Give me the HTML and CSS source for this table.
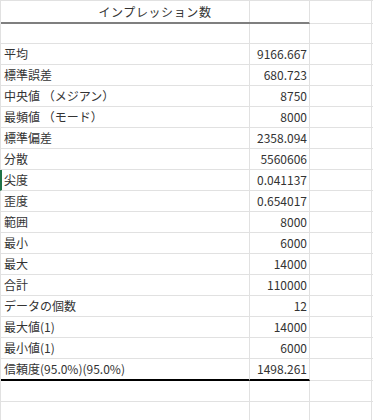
FILE: index.html
```html
<!DOCTYPE html>
<html lang="ja">
<head>
<meta charset="utf-8">
<title>記述統計</title>
<link rel="stylesheet" href="styles.css">
</head>
<body>
<div class="sheet">
  <div class="cell head title">インプレッション数</div><div class="cell head"></div><div class="cell head last"></div>

  <div class="cell blank"></div><div class="cell blank"></div><div class="cell blank"></div><div class="cell blank last"></div>

  <div class="cell label">平均</div><div class="cell num">9166.667</div><div class="cell"></div><div class="cell last"></div>
  <div class="cell label">標準誤差</div><div class="cell num">680.723</div><div class="cell"></div><div class="cell last"></div>
  <div class="cell label">中央値 （メジアン）</div><div class="cell num">8750</div><div class="cell"></div><div class="cell last"></div>
  <div class="cell label">最頻値 （モード）</div><div class="cell num">8000</div><div class="cell"></div><div class="cell last"></div>
  <div class="cell label">標準偏差</div><div class="cell num">2358.094</div><div class="cell"></div><div class="cell last"></div>
  <div class="cell label">分散</div><div class="cell num">5560606</div><div class="cell"></div><div class="cell last"></div>
  <div class="cell label sel">尖度</div><div class="cell num">0.041137</div><div class="cell"></div><div class="cell last"></div>
  <div class="cell label">歪度</div><div class="cell num">0.654017</div><div class="cell"></div><div class="cell last"></div>
  <div class="cell label">範囲</div><div class="cell num">8000</div><div class="cell"></div><div class="cell last"></div>
  <div class="cell label">最小</div><div class="cell num">6000</div><div class="cell"></div><div class="cell last"></div>
  <div class="cell label">最大</div><div class="cell num">14000</div><div class="cell"></div><div class="cell last"></div>
  <div class="cell label">合計</div><div class="cell num">110000</div><div class="cell"></div><div class="cell last"></div>
  <div class="cell label">データの個数</div><div class="cell num">12</div><div class="cell"></div><div class="cell last"></div>
  <div class="cell label">最大値(1)</div><div class="cell num">14000</div><div class="cell"></div><div class="cell last"></div>
  <div class="cell label">最小値(1)</div><div class="cell num">6000</div><div class="cell"></div><div class="cell last"></div>
  <div class="cell label end">信頼度(95.0%)(95.0%)</div><div class="cell num end">1498.261</div><div class="cell endc"></div><div class="cell endc last"></div>

  <div class="cell"></div><div class="cell"></div><div class="cell"></div><div class="cell last"></div>
  <div class="cell"></div><div class="cell"></div><div class="cell"></div><div class="cell last"></div>
</div>
</body>
</html>
```

FILE: styles.css
```css
* {
  box-sizing: border-box;
}

html, body {
  margin: 0;
  padding: 0;
  background: #ffffff;
}

body {
  font-family: "Noto Sans CJK JP", "Noto Sans", sans-serif;
  font-size: 12px;
  color: #333333;
  overflow: hidden;
}

.sheet {
  display: grid;
  grid-template-columns: 249px 60px 62px 1fr;
  border-top: 1px solid #e1e1e1;
  border-left: 1px solid #e1e1e1;
  width: 373px;
}

.cell {
  height: 21px;
  border-right: 1px solid #e1e1e1;
  border-bottom: 1px solid #e1e1e1;
  line-height: 20px;
  white-space: nowrap;
  overflow: visible;
}

.cell.last {
  border-right: none;
}

.head {
  height: 23px;
}

.title {
  grid-column: span 2;
  border-bottom: 2px solid #7f7f7f;
  text-align: center;
  line-height: 21px;
  letter-spacing: 0.6px;
  background: linear-gradient(to right, transparent 248px, #e1e1e1 248px, #e1e1e1 249px, transparent 249px);
}

.blank {
  height: 20px;
}

.label {
  padding-left: 3px;
}

.num {
  text-align: right;
  padding-right: 2px;
}

.sel {
  margin-left: -1px;
  border-left: 2px solid #217346;
  padding-left: 2px;
}

.end {
  height: 22px;
  border-bottom: 2px solid #000000;
}

.endc {
  height: 22px;
}
```
